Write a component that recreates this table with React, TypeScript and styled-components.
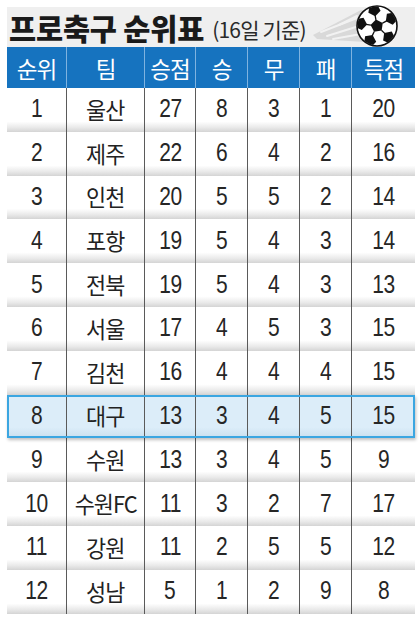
import styled, { createGlobalStyle } from "styled-components";

const GlobalStyle = createGlobalStyle`
  html, body {
    margin: 0;
    padding: 0;
    background: #ffffff;
  }
  body {
    font-family: "Liberation Sans", "Noto Sans CJK KR", sans-serif;
  }
`;

type Team = {
  rank: number;
  name: string;
  pts: number;
  w: number;
  d: number;
  l: number;
  gf: number;
};

const teams: Team[] = [
  { rank: 1, name: "울산", pts: 27, w: 8, d: 3, l: 1, gf: 20 },
  { rank: 2, name: "제주", pts: 22, w: 6, d: 4, l: 2, gf: 16 },
  { rank: 3, name: "인천", pts: 20, w: 5, d: 5, l: 2, gf: 14 },
  { rank: 4, name: "포항", pts: 19, w: 5, d: 4, l: 3, gf: 14 },
  { rank: 5, name: "전북", pts: 19, w: 5, d: 4, l: 3, gf: 13 },
  { rank: 6, name: "서울", pts: 17, w: 4, d: 5, l: 3, gf: 15 },
  { rank: 7, name: "김천", pts: 16, w: 4, d: 4, l: 4, gf: 15 },
  { rank: 8, name: "대구", pts: 13, w: 3, d: 4, l: 5, gf: 15 },
  { rank: 9, name: "수원", pts: 13, w: 3, d: 4, l: 5, gf: 9 },
  { rank: 10, name: "수원FC", pts: 11, w: 3, d: 2, l: 7, gf: 17 },
  { rank: 11, name: "강원", pts: 11, w: 2, d: 5, l: 5, gf: 12 },
  { rank: 12, name: "성남", pts: 5, w: 1, d: 2, l: 9, gf: 8 },
];

const headers = ["순위", "팀", "승점", "승", "무", "패", "득점"];
const HIGHLIGHT = 8;

const Page = styled.div`
  width: 420px;
  padding: 7px 5px 0 7px;
  box-sizing: border-box;
`;

const TitleBar = styled.div`
  height: 40px;
  background: #efefef;
  display: flex;
  align-items: flex-end;
  padding: 0 0 5px 2px;
  box-sizing: border-box;
  overflow: visible;
`;

const Title = styled.h1`
  margin: 0;
  flex: none;
  white-space: nowrap;
  font-family: "Noto Sans CJK KR", sans-serif;
  font-weight: 900;
  font-size: 29.5px;
  line-height: 30px;
  letter-spacing: -0.2px;
  color: #1a1a1a;
`;

const Sub = styled.span`
  margin-left: 8px;
  flex: none;
  white-space: nowrap;
  font-family: "Noto Sans CJK KR", sans-serif;
  font-weight: 400;
  font-size: 21px;
  line-height: 26px;
  letter-spacing: -0.8px;
  color: #2a2a2a;
`;

const BallArt = styled.svg`
  margin-left: auto;
  margin-right: 16px;
  align-self: flex-start;
  margin-top: -3px;
  flex: none;
`;

const COLS = "60px 78px 51px 52px 52px 52px 63px";

const HeadRow = styled.div`
  display: grid;
  grid-template-columns: ${COLS};
  height: 41px;
  background: #1673bf;
`;

const HeadCell = styled.div`
  display: flex;
  align-items: center;
  justify-content: center;
  font-family: "Noto Sans CJK KR", sans-serif;
  font-size: 22.5px;
  color: #ffffff;
  border-right: 1px solid #7fb3e0;
  letter-spacing: -1px;
  &:last-child {
    border-right: none;
  }
`;

const Row = styled.div<{ $hl: boolean }>`
  display: grid;
  grid-template-columns: ${COLS};
  height: 43.8px;
  box-sizing: border-box;
  position: relative;
  background: ${(p) =>
    p.$hl
      ? "linear-gradient(to bottom, #dcedf9 0%, #dcedf9 75%, #c9dfee 100%)"
      : "linear-gradient(to bottom, #ffffff 0%, #ffffff 76%, #e9e9e9 90%, #d4d4d4 100%)"};
  ${(p) =>
    p.$hl
      ? `
    outline: 2px solid #3ba6e1;
    outline-offset: -2px;
    box-shadow: 1px 2px 3px rgba(0,0,0,0.25);
    z-index: 1;
  `
      : ""}
`;

const Cell = styled.div`
  display: flex;
  align-items: center;
  justify-content: center;
  color: #222222;
  border-right: 1px solid #5a5a5a;
  padding-bottom: 2px;
  &:last-child {
    border-right: none;
  }
`;

const Num = styled.span`
  display: inline-block;
  font-family: "Liberation Sans", sans-serif;
  font-size: 25px;
  transform: scaleX(0.84);
  letter-spacing: -0.5px;
  color: #262626;
`;

const Name = styled.span`
  display: inline-block;
  font-family: "Noto Sans CJK KR", sans-serif;
  font-size: 23px;
  letter-spacing: -1px;
  transform: scaleX(0.95);
  white-space: nowrap;
`;

const Ball = () => {
  const pent = (cx: number, cy: number, r: number, rot: number) =>
    Array.from({ length: 5 }, (_, k) => {
      const a = ((rot + 72 * k) * Math.PI) / 180;
      return `${(cx + r * Math.cos(a)).toFixed(2)},${(cy + r * Math.sin(a)).toFixed(2)}`;
    }).join(" ");
  const outer = Array.from({ length: 5 }, (_, k) => {
    const a = ((-100 + 72 * k) * Math.PI) / 180;
    return { x: 16.5 * Math.cos(a), y: 16.5 * Math.sin(a), deg: -100 + 72 * k };
  });
  const inner = Array.from({ length: 5 }, (_, k) => {
    const a = ((-100 + 72 * k) * Math.PI) / 180;
    return { x: 6.2 * Math.cos(a), y: 6.2 * Math.sin(a), ox: 11 * Math.cos(a), oy: 11 * Math.sin(a) };
  });
  return (
    <BallArt width="86" height="44" viewBox="0 0 86 44">
      <g fill="#d9d9d9">
        <polygon points="0,31 48,6 56,8 52,38 4,35" />
      </g>
      <g stroke="#f2f2f2" strokeWidth="2" strokeLinecap="round">
        <line x1="8" y1="28" x2="44" y2="14" />
        <line x1="14" y1="32" x2="46" y2="22" />
        <line x1="20" y1="35" x2="48" y2="30" />
        <line x1="26" y1="21" x2="44" y2="12" />
      </g>
      <defs>
        <clipPath id="ballclip">
          <circle cx="0" cy="0" r="19.5" />
        </clipPath>
      </defs>
      <g transform="translate(64,22)">
        <circle cx="0" cy="0" r="20" fill="#ffffff" stroke="#111" strokeWidth="1.6" />
        <g clipPath="url(#ballclip)">
          <polygon points={pent(0, 0, 6.5, -100)} fill="#111" />
          {outer.map((o, i) => (
            <polygon key={i} points={pent(o.x, o.y, 6.5, o.deg + 180)} fill="#111" />
          ))}
          {inner.map((s, i) => (
            <line key={i} x1={s.x} y1={s.y} x2={s.ox} y2={s.oy} stroke="#111" strokeWidth="1.3" />
          ))}
        </g>
      </g>
    </BallArt>
  );
};

export default function App() {
  return (
    <>
      <GlobalStyle />
      <Page>
        <TitleBar>
          <Title>프로축구 순위표</Title>
          <Sub>(16일 기준)</Sub>
          <Ball />
        </TitleBar>
        <HeadRow>
          {headers.map((h) => (
            <HeadCell key={h}>{h}</HeadCell>
          ))}
        </HeadRow>
        {teams.map((t) => (
          <Row key={t.rank} $hl={t.rank === HIGHLIGHT}>
            <Cell><Num>{t.rank}</Num></Cell>
            <Cell><Name>{t.name}</Name></Cell>
            <Cell><Num>{t.pts}</Num></Cell>
            <Cell><Num>{t.w}</Num></Cell>
            <Cell><Num>{t.d}</Num></Cell>
            <Cell><Num>{t.l}</Num></Cell>
            <Cell><Num>{t.gf}</Num></Cell>
          </Row>
        ))}
      </Page>
    </>
  );
}
